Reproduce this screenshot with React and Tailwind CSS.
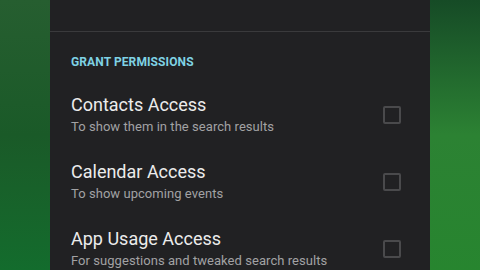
export default function App() {
  const items = [
    { title: "Contacts Access", sub: "To show them in the search results" },
    { title: "Calendar Access", sub: "To show upcoming events" },
    { title: "App Usage Access", sub: "For suggestions and tweaked search results" },
  ];

  return (
    <div
      className="w-[480px] h-[270px] overflow-hidden flex"
      style={{ fontFamily: "Roboto, 'Liberation Sans', sans-serif" }}
    >
      <div className="w-[50px] h-full bg-gradient-to-b from-[#265e30] via-[#1a5a28] to-[#136c2d]" />
      <div className="w-[380px] h-full bg-[#212123] flex flex-col shrink-0">
        <div className="h-[32px] border-b border-[#3a3a3c] shrink-0" />
        <div className="pl-[21px] pr-[29px] pt-[23px]">
          <div className="text-[12px] font-bold text-[#7fd2e4] tracking-[0.1px] leading-[14px]">
            GRANT PERMISSIONS
          </div>
          <div className="flex flex-col mt-[25px] gap-[25px]">
            {items.map((it) => (
              <div key={it.title} className="flex items-center justify-between">
                <div className="flex flex-col">
                  <div className="text-[18px] text-[#ececec] leading-[22px]">{it.title}</div>
                  <div className="text-[13px] text-[#a2a2a4] leading-[19px] mt-[1px] tracking-[0.05px]">{it.sub}</div>
                </div>
                <div className="w-[18px] h-[18px] border-2 border-[#4a4a4c] rounded-[2px] shrink-0" />
              </div>
            ))}
          </div>
        </div>
      </div>
      <div className="flex-1 h-full bg-gradient-to-b from-[#164b26] via-[#2c8233] to-[#27852f]" />
    </div>
  );
}
